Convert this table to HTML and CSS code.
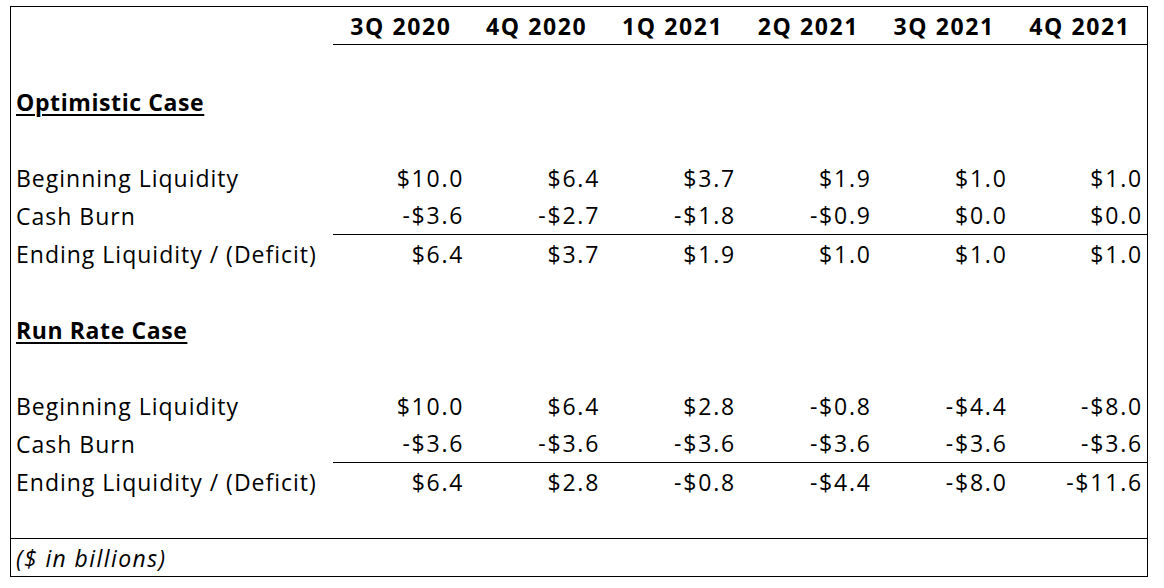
FILE: index.html
```html
<!DOCTYPE html>
<html>
<head>
<meta charset="utf-8">
<link rel="stylesheet" href="styles.css">
</head>
<body>
<table class="sheet">
  <colgroup>
    <col class="c-label">
    <col><col><col><col><col><col>
  </colgroup>
  <tr class="hdr">
    <td></td>
    <th>3Q 2020</th><th>4Q 2020</th><th>1Q 2021</th><th>2Q 2021</th><th>3Q 2021</th><th>4Q 2021</th>
  </tr>
  <tr class="blank"><td colspan="7"></td></tr>
  <tr class="section"><td colspan="7"><span>Optimistic Case</span></td></tr>
  <tr class="blank"><td colspan="7"></td></tr>
  <tr>
    <td class="label">Beginning Liquidity</td>
    <td class="num">$10.0</td><td class="num">$6.4</td><td class="num">$3.7</td><td class="num">$1.9</td><td class="num">$1.0</td><td class="num">$1.0</td>
  </tr>
  <tr class="ruled">
    <td class="label">Cash Burn</td>
    <td class="num">-$3.6</td><td class="num">-$2.7</td><td class="num">-$1.8</td><td class="num">-$0.9</td><td class="num">$0.0</td><td class="num">$0.0</td>
  </tr>
  <tr>
    <td class="label">Ending Liquidity / (Deficit)</td>
    <td class="num">$6.4</td><td class="num">$3.7</td><td class="num">$1.9</td><td class="num">$1.0</td><td class="num">$1.0</td><td class="num">$1.0</td>
  </tr>
  <tr class="blank"><td colspan="7"></td></tr>
  <tr class="section"><td colspan="7"><span>Run Rate Case</span></td></tr>
  <tr class="blank"><td colspan="7"></td></tr>
  <tr>
    <td class="label">Beginning Liquidity</td>
    <td class="num">$10.0</td><td class="num">$6.4</td><td class="num">$2.8</td><td class="num">-$0.8</td><td class="num">-$4.4</td><td class="num">-$8.0</td>
  </tr>
  <tr class="ruled">
    <td class="label">Cash Burn</td>
    <td class="num">-$3.6</td><td class="num">-$3.6</td><td class="num">-$3.6</td><td class="num">-$3.6</td><td class="num">-$3.6</td><td class="num">-$3.6</td>
  </tr>
  <tr>
    <td class="label">Ending Liquidity / (Deficit)</td>
    <td class="num">$6.4</td><td class="num">$2.8</td><td class="num">-$0.8</td><td class="num">-$4.4</td><td class="num">-$8.0</td><td class="num">-$11.6</td>
  </tr>
  <tr class="blank"><td colspan="7"></td></tr>
  <tr class="foot"><td colspan="7">($ in billions)</td></tr>
</table>
</body>
</html>
```
FILE: styles.css
```css
html, body {
  margin: 0;
  padding: 0;
  background: #ffffff;
}
body {
  padding: 6px 0 0 10px;
  font-family: "Open Sans", Lato, sans-serif;
  color: #000000;
}
.sheet {
  border-collapse: collapse;
  table-layout: fixed;
  width: 1138px;
  border: 1px solid #000;
  font-size: 23px;
}
.c-label { width: 322px; }
.sheet td, .sheet th {
  height: 38px;
  padding: 0 4px 0 5px;
  box-sizing: border-box;
  vertical-align: middle;
  white-space: nowrap;
  line-height: 28px;
}
.label {
  letter-spacing: 1px;
}
.hdr th {
  font-weight: 700;
  text-align: center;
  letter-spacing: 1.6px;
  border-bottom: 1px solid #000;
}
.section td {
  font-weight: 700;
  letter-spacing: 0.6px;
}
.section span {
  text-decoration: underline;
  text-underline-offset: 3px;
  text-decoration-thickness: 2px;
}
.num {
  text-align: right;
  letter-spacing: 1.8px;
  padding-right: 3px;
}
.ruled .num {
  border-bottom: 1px solid #000;
}
.foot td {
  border-top: 1px solid #000;
  font-style: italic;
  letter-spacing: 1.4px;
}
```
